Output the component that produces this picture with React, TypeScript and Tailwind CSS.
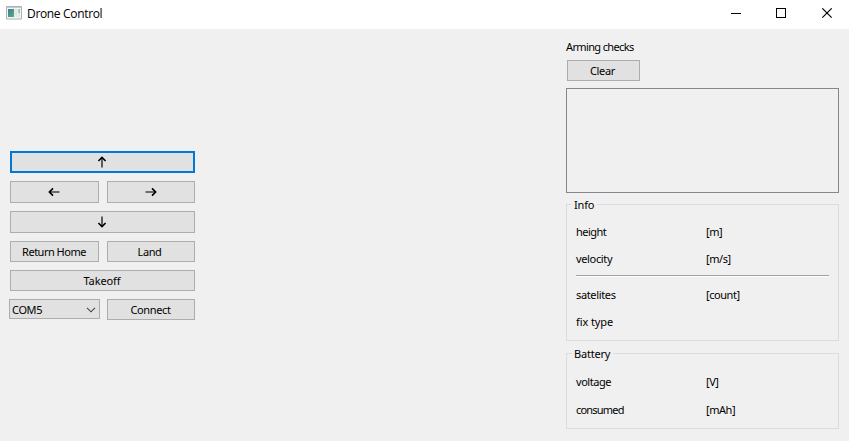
import type { ReactNode } from 'react';

const button =
  'flex items-center justify-center border border-[#adadad] bg-[#e1e1e1] leading-none';

function Arrow({ turn }: { turn: string }) {
  return (
    <svg viewBox="0 0 12 12" className={`size-3 ${turn}`} fill="none">
      <path d="M6 11.5V2" stroke="#444" strokeWidth="1.7" />
      <path d="M2.4 5L6 1.4L9.6 5" stroke="#000" strokeWidth="1.6" />
    </svg>
  );
}

function Row({ name, unit, className }: { name: string; unit?: string; className: string }) {
  return (
    <div className={`flex h-4 items-center ${className}`}>
      <span className="w-[130px]">{name}</span>
      <span className="tracking-[-0.45px]">{unit}</span>
    </div>
  );
}

function Group({ title, className, children }: { title: string; className: string; children: ReactNode }) {
  return (
    <section className={`relative border border-[#dcdcdc] px-[9px] ${className}`}>
      <h2 className="absolute -top-2 left-[5px] bg-[#f0f0f0] pr-[3px] pl-0.5 leading-4 tracking-[-0.2px]">{title}</h2>
      {children}
    </section>
  );
}

function TitleBar() {
  return (
    <header className="flex h-[29px] items-start bg-white">
      <svg className="mt-[6px] ml-[6px] h-[14px] w-4 shrink-0" viewBox="0 0 16 14">
        <defs>
          <linearGradient id="pane" x1="0" y1="0" x2="1" y2="1">
            <stop offset="0" stopColor="#3f78a8" />
            <stop offset="1" stopColor="#58b070" />
          </linearGradient>
        </defs>
        <path d="M.5.5h15v12.5H.5z" fill="#f4f6f6" stroke="#a9b2b4" />
        <path d="M1 1h14v1H1z" fill="#c5cccd" />
        <path d="M2 3h6v8H2z" fill="url(#pane)" />
        <path d="M8.5 3h3v8h-3z" fill="#e3e5e6" />
        <path d="M12.3 3H14v4h-1.7z" fill="#8fc0b4" />
        <path d="M12.3 7H14v4h-1.7z" fill="#dfe5e5" />
      </svg>
      <h1 className="mt-[6px] ml-[5px] font-['Open_Sans',sans-serif] text-[12px] leading-4 tracking-[-0.33px]">Drone Control</h1>
      <svg className="mt-2 ml-auto h-[11px] w-[104px]" viewBox="0 0 104 11" fill="none" stroke="#000">
        <path d="M0 5.5h10M45.5.5h9v9h-9z" shapeRendering="crispEdges" />
        <path d="M91.3.3l9.4 9.4M100.7.3l-9.4 9.4" strokeWidth="1.1" />
      </svg>
      <span className="w-[14px] shrink-0" />
    </header>
  );
}

export default function App() {
  return (
    <div className="h-[441px] w-[849px] overflow-hidden bg-[#f0f0f0] font-['Noto_Sans',sans-serif] text-[11px] tracking-[-0.35px] text-black">
      <TitleBar />
      <main className="flex justify-between pr-[10px] pl-[9px]">
        <div className="flex w-[186px] flex-col pt-[122px]">
          <button className="ml-px flex h-[22px] items-center justify-center border-2 border-[#0078d7] bg-[#e1e1e1] pr-px">
            <Arrow turn="" />
          </button>
          <div className="mt-2 ml-px flex h-[22px] gap-2">
            <button className={`${button} w-[89px] pr-px`}><Arrow turn="-rotate-90" /></button>
            <button className={`${button} w-[88px]`}><Arrow turn="rotate-90" /></button>
          </div>
          <button className={`${button} mt-2 ml-px h-[22px] pr-px`}><Arrow turn="rotate-180" /></button>
          <div className="mt-2 ml-px flex h-[21px] gap-2">
            <button className={`${button} w-[89px] pr-px tracking-[-0.5px]`}>Return Home</button>
            <button className={`${button} w-[88px] pr-[3px] tracking-[-0.4px]`}>Land</button>
          </div>
          <button className={`${button} mt-2 ml-px h-[21px] pr-px tracking-[-0.1px]`}>Takeoff</button>
          <div className="mt-2 flex items-start gap-[7px]">
            <div className="flex h-5 w-[91px] items-center justify-between border border-[#adadad] bg-[#e1e1e1] pr-[3px] pl-0.5">
              <span className="pt-0.5 leading-4">COM5</span>
              <svg className="mt-0.5 h-[6px] w-[10px]" viewBox="0 0 10 6" fill="none" stroke="#444" strokeWidth="1.1">
                <path d="M1 .8l4 4l4-4" />
              </svg>
            </div>
            <button className={`${button} h-[21px] w-[88px] pr-px`}>Connect</button>
          </div>
        </div>
        <div className="flex w-[273px] flex-col pt-[10px]">
          <h2 className="h-4 leading-4 tracking-[-0.63px]">Arming checks</h2>
          <button className={`${button} mt-[5px] ml-px h-[21px] w-[73px] pr-0.5`}>Clear</button>
          <div className="mt-[7px] h-[105px] border border-[#828790]" />
          <Group title="Info" className="mt-[11px] h-[137px]">
            <Row name="height" unit="[m]" className="mt-[19px] tracking-[-0.55px]" />
            <Row name="velocity" unit="[m/s]" className="mt-[11px]" />
            <div className="mt-2 h-0.5 border-t border-[#a0a0a0] bg-white" />
            <Row name="satelites" unit="[count]" className="mt-[10px]" />
            <Row name="fix type" className="mt-[11px] tracking-[-0.1px]" />
          </Group>
          <Group title="Battery" className="mt-3 h-[76px]">
            <Row name="voltage" unit="[V]" className="mt-5 tracking-[-0.45px]" />
            <Row name="consumed" unit="[mAh]" className="mt-3 tracking-[-0.8px]" />
          </Group>
        </div>
      </main>
    </div>
  );
}
